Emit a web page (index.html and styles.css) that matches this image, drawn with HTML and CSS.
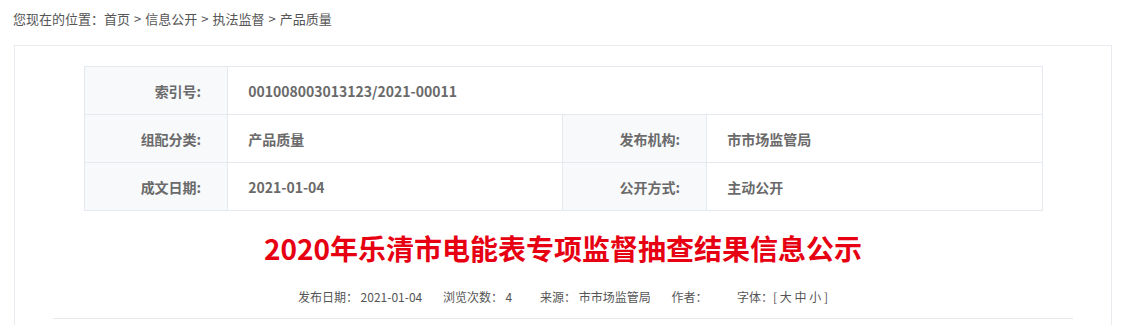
FILE: index.html
```html
<!DOCTYPE html>
<html lang="zh-CN">
<head>
    <meta charset="UTF-8">
    <meta name="viewport" content="width=device-width, initial-scale=1.0">
    <title>2020年乐清市电能表专项监督抽查结果信息公示</title>
    <link rel="stylesheet" href="styles.css">
</head>
<body>
    <div class="crumb">
        您现在的位置：<a href="#">首页</a><span class="sep">&gt;</span><a href="#">信息公开</a><span class="sep">&gt;</span><a href="#">执法监督</a><span class="sep">&gt;</span><a href="#">产品质量</a>
    </div>

    <div class="box">
        <table class="info-table">
            <colgroup>
                <col class="col-label">
                <col class="col-value">
                <col class="col-label">
                <col class="col-value">
            </colgroup>
            <tr>
                <th>索引号:</th>
                <td colspan="3">001008003013123/2021-00011</td>
            </tr>
            <tr>
                <th>组配分类:</th>
                <td>产品质量</td>
                <th>发布机构:</th>
                <td>市市场监管局</td>
            </tr>
            <tr>
                <th>成文日期:</th>
                <td>2021-01-04</td>
                <th>公开方式:</th>
                <td>主动公开</td>
            </tr>
        </table>

        <h1 class="title">2020年乐清市电能表专项监督抽查结果信息公示</h1>

        <div class="meta">
            <span>发布日期： 2021-01-04</span>
            <span class="views">浏览次数： 4</span>
            <span>来源： 市市场监管局</span>
            <span class="author">作者：</span>
            <span>字体：[ <a href="#">大</a> <a href="#">中</a> <a href="#">小</a> ]</span>
        </div>
    </div>
</body>
</html>
```

FILE: styles.css
```css
body {
    margin: 0;
    font-family: "Noto Sans CJK SC", "Microsoft YaHei", sans-serif;
    color: #555;
    background: #fff;
}
a {
    color: #555;
    text-decoration: none;
}
.crumb {
    height: 36px;
    padding: 9px 13px 0;
    font-size: 13px;
    line-height: 20px;
}
.crumb .sep {
    margin: 0 4px;
}
.box {
    box-sizing: border-box;
    height: 280px;
    margin: 0 14px;
    padding-top: 20px;
    border: 1px solid #e8ecf0;
    border-bottom: none;
}
.info-table {
    width: 87.5%;
    margin: 0 auto;
    border-collapse: collapse;
    table-layout: fixed;
    font-size: 14px;
    font-weight: bold;
    color: #6a6a6a;
}
.col-label {
    width: 15%;
}
.col-value {
    width: 35%;
}
.info-table tr {
    height: 48px;
}
.info-table th, .info-table td {
    border: 1px solid #e4e9ef;
    padding: 0;
}
.info-table th {
    background-color: #f7f9fb;
    text-align: right;
    padding-right: 26px;
    font-weight: bold;
}
.info-table td {
    text-align: left;
    padding-left: 20px;
}
.title {
    margin: 17px 0 0;
    font-size: 28px;
    line-height: 40px;
    text-align: center;
    color: #e60012;
    font-weight: bold;
}
.meta {
    width: 93%;
    margin: 19px auto 0;
    padding-bottom: 11px;
    border-bottom: 1px solid #e8e8e8;
    text-align: center;
    font-size: 12px;
    line-height: 20px;
}
.meta span {
    margin: 0 9px;
}
.meta .views {
    margin-right: 16px;
}
.meta .author {
    margin-right: 18px;
}
```
